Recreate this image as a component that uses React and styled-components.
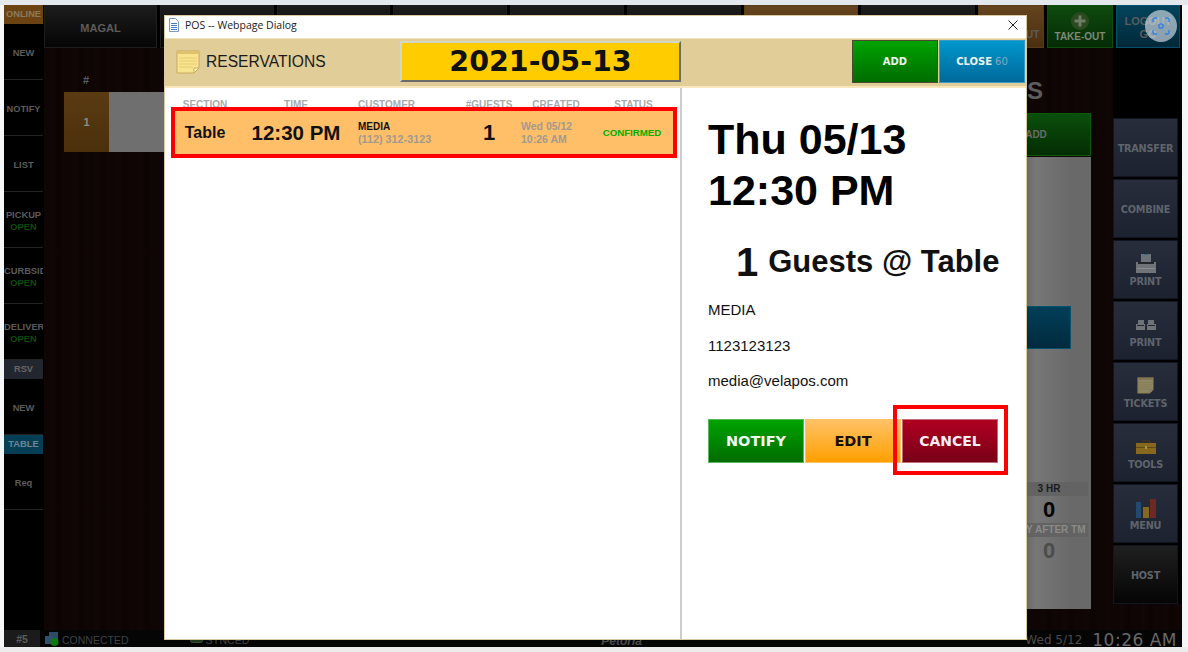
import React from 'react';
import styled, { createGlobalStyle } from 'styled-components';

const GlobalStyle = createGlobalStyle`
    html, body {
        margin: 0;
        padding: 0;
        background: #f2f4f6;
    }
    * {
        box-sizing: border-box;
    }
`;

const SANS = '"Liberation Sans", Arial, sans-serif';
const WIDE = '"DejaVu Sans", Verdana, sans-serif';
const WOOD = 'repeating-linear-gradient(90deg, #0e0504 0, #0e0504 7px, #110706 7px, #0c0403 15px, #0f0605 22px)';

const Frame = styled.div`
    width: 1188px;
    height: 652px;
    overflow: hidden;
    position: relative;
    padding: 5px 6px 5px 4px;
    background: linear-gradient(#e3e8ed 0, #e3e8ed 5px, #f4f6f8 5px, #f4f6f8 647px, #ececec 647px);
    font-family: ${SANS};
`;

const Screen = styled.div`
    width: 1178px;
    height: 642px;
    display: flex;
    flex-direction: column;
    background: #000;
`;

const Main = styled.div`
    height: 625px;
    display: flex;
`;

const Sidebar = styled.div`
    width: 40px;
    flex: none;
    background: #000;
    display: flex;
    flex-direction: column;
`;

const SideItem = styled.div`
    height: 56px;
    width: 39px;
    flex: none;
    border-bottom: 1px solid #242424;
    display: flex;
    flex-direction: column;
    justify-content: center;
    overflow: hidden;
    font-size: 9.3px;
    font-weight: bold;
    line-height: 12px;
    color: #5b5b5b;
    text-align: center;
    white-space: nowrap;
    padding-top: 2px;
`;

const SideLine = styled.div`
    overflow: hidden;
`;

const OpenLabel = styled.div`
    color: #0c4a0c;
`;

const SideTag = styled.div`
    height: 19px;
    width: 39px;
    flex: none;
    font-size: 9.3px;
    font-weight: bold;
    line-height: 19px;
    text-align: center;
    color: ${p => p.$color || '#666'};
    background: ${p => p.$bg};
`;

const Center = styled.div`
    flex: 1;
    display: flex;
    flex-direction: column;
    min-width: 0;
`;

const TopBar = styled.div`
    height: 43px;
    flex: none;
    display: flex;
    gap: 3px;
    padding-right: 5px;
    background: #000;
`;

const TopButton = styled.div`
    width: ${p => p.$w}px;
    flex: none;
    border: 1px solid ${p => p.$line || '#1d1d1d'};
    background: ${p => p.$bg || 'linear-gradient(#1c1c1c, #050505)'};
    color: #5c5c5c;
    font-size: 11px;
    font-weight: bold;
    display: flex;
    flex-direction: column;
    align-items: center;
    justify-content: center;
    overflow: hidden;
    white-space: nowrap;
    line-height: 13px;
    padding-top: ${p => p.$drop || 3}px;
`;

const SmallLabel = styled.span`
    font-size: 10px;
    color: ${p => p.$color || '#5c5c5c'};
`;

const Body = styled.div`
    flex: 1;
    display: flex;
    min-height: 0;
`;

const Floor = styled.div`
    flex: 1;
    display: flex;
    justify-content: space-between;
    background: ${WOOD};
    padding-right: 22px;
`;

const TicketList = styled.div`
    padding: 26px 0 0 20px;
`;

const ListHead = styled.div`
    height: 18px;
    display: flex;
    gap: 74px;
    padding-left: 19px;
    font-size: 11px;
    font-weight: bold;
    color: #5c5c5c;
`;

const TicketRow = styled.div`
    display: flex;
    height: 60px;
    color: #8b8b8b;
    font-size: 11px;
    font-weight: bold;
`;

const TicketNum = styled.div`
    width: 45px;
    background: linear-gradient(#5a3b12, #4b300c);
    display: flex;
    align-items: center;
    justify-content: center;
`;

const TicketBody = styled.div`
    width: 120px;
    background: #6f6f6f;
`;

const TablePanel = styled.div`
    width: 180px;
    display: flex;
    flex-direction: column;
    align-items: flex-end;
`;

const PanelTitle = styled.div`
    height: 65px;
    padding: 29px 48px 0 0;
    font-size: 24px;
    line-height: 28px;
    font-weight: bold;
    color: #5c5c5c;
`;

const PanelAdd = styled.div`
    width: 110px;
    height: 43px;
    background: linear-gradient(#0b4f0b, #042c04);
    border: 1px solid #0a5a0a;
    color: #6a6a6a;
    font-size: 10px;
    font-weight: bold;
    display: flex;
    align-items: center;
    justify-content: center;
`;

const GreyBoard = styled.div`
    margin-top: 1px;
    width: 180px;
    height: 452px;
    padding-top: 149px;
    background: linear-gradient(90deg, #6a6a6a 0, #6a6a6a 115px, #777 125px, #696969 160px);
    display: flex;
    flex-direction: column;
    align-items: flex-end;
`;

const BlueBlock = styled.div`
    width: 130px;
    height: 43px;
    margin-right: 20px;
    background: linear-gradient(#023f58, #012a3e);
    border: 1px solid #03536f;
`;

const Stats = styled.div`
    margin-top: 133px;
    margin-right: 3px;
    width: 78px;
    text-align: center;
    font-weight: bold;
`;

const StatLabel = styled.div`
    height: 14px;
    font-size: 10px;
    line-height: 14px;
    white-space: nowrap;
    color: ${p => p.$color};
    background: #636363;
    display: flex;
    justify-content: center;
`;

const StatValue = styled.div`
    height: 27px;
    font-size: 22px;
    line-height: 27px;
    color: ${p => p.$color};
`;

const ActionColumn = styled.div`
    width: 69px;
    flex: none;
    background: #000;
    padding-top: 70px;
    display: flex;
    flex-direction: column;
    gap: 2px;
`;

const ActionButton = styled.div`
    width: 65px;
    height: 59px;
    flex: none;
    border: 1px solid #101620;
    background: ${p => p.$dark ? 'linear-gradient(#1f1f1f, #050505)' : 'linear-gradient(#272d3a, #1c2230)'};
    color: #5f646c;
    font-size: 9.7px;
    line-height: 12px;
    font-weight: bold;
    display: flex;
    flex-direction: column;
    align-items: center;
    justify-content: center;
    font-family: ${WIDE};
    letter-spacing: -0.2px;
    padding-top: 2px;
`;

const IconSlot = styled.div`
    height: 24px;
    display: flex;
    align-items: center;
    justify-content: center;
    margin-top: -2px;
`;

const ActionFoot = styled.div`
    flex: 1;
    margin-top: -2px;
    background: ${WOOD};
`;

const StatusBar = styled.div`
    height: 17px;
    flex: none;
    display: flex;
    align-items: center;
    background: #050505;
    font-size: 10.5px;
    color: #3e4143;
`;

const StationTag = styled.div`
    width: 36px;
    height: 17px;
    background: #1b1b1b;
    color: #5c5c5c;
    font-weight: bold;
    text-align: center;
    line-height: 19px;
    margin-right: 5px;
`;

const StatusText = styled.span`
    margin: 2px ${p => p.$after || 0}px 0 3px;
`;

const VenueName = styled.span`
    margin: 5px 0 0 352px;
    font-size: 12px;
    font-weight: bold;
    font-style: italic;
    color: #4a4a4a;
`;

const StatusClock = styled.div`
    margin-left: auto;
    display: flex;
    align-items: center;
    gap: 10px;
    padding: 3px 5px 0 0;
    font-family: ${WIDE};
    color: #686868;
`;

const ClockTime = styled.span`
    font-size: 17px;
    letter-spacing: 0.5px;
`;

const ClockDate = styled.span`
    font-size: 12px;
    color: #4a4a4a;
`;

const Dialog = styled.div`
    position: absolute;
    left: 164px;
    top: 15px;
    width: 863px;
    height: 625px;
    border: 1px solid #d8c9a0;
    background: #fff;
    display: flex;
    flex-direction: column;
`;

const TitleBar = styled.div`
    height: 22px;
    flex: none;
    display: flex;
    align-items: center;
    padding: 0 8px 4px 3px;
    background: #fff;
    font-family: "Open Sans", "Noto Sans", sans-serif;
    font-size: 10.5px;
    color: #1a1a1a;
    gap: 5px;
`;

const CloseX = styled.svg`
    margin-left: auto;
`;

const Header = styled.div`
    height: 50px;
    flex: none;
    display: flex;
    align-items: center;
    padding: 0 1px 2px 11px;
    background: #e0cd98;
    border-top: 1px solid #efe2bd;
    border-bottom: 2px solid #f8e7bd;
`;

const HeaderTitle = styled.div`
    width: 194px;
    margin-left: 6px;
    font-size: 15.6px;
    color: #1a1a1a;
`;

const DateButton = styled.div`
    width: 281px;
    height: 41px;
    background: #ffcc00;
    border: 2px solid;
    border-color: #d6d6c8 #6b6b6b #6b6b6b #d6d6c8;
    font-family: ${WIDE};
    font-size: 28.5px;
    font-weight: bold;
    color: #111;
    display: flex;
    align-items: center;
    justify-content: center;
`;

const HeaderButtons = styled.div`
    margin-left: auto;
    display: flex;
    gap: 1px;
`;

const HeaderButton = styled.div`
    width: 86px;
    height: 43px;
    background: ${p => p.$bg};
    border: 1px solid ${p => p.$line};
    color: #eef4ee;
    font-family: ${WIDE};
    font-size: 10px;
    font-weight: bold;
    display: flex;
    align-items: center;
    justify-content: center;
    gap: 3px;
`;

const Countdown = styled.span`
    color: #83a9bd;
    font-weight: normal;
`;

const DialogBody = styled.div`
    flex: 1;
    display: flex;
    min-height: 0;
`;

const ListPane = styled.div`
    width: 517px;
    flex: none;
    border-right: 2px solid #cccccc;
    padding: 9px 0 0 6px;
`;

const COLUMNS = '60px 122px 103px 58px 76px 79px';

const ListHeader = styled.div`
    display: grid;
    grid-template-columns: ${COLUMNS};
    height: 10px;
    padding: 0 4px;
    overflow: hidden;
    font-size: 10px;
    line-height: 16px;
    font-weight: bold;
    color: #a9abad;
    text-align: center;
    white-space: nowrap;
`;

const CustomerHead = styled.div`
    text-align: left;
    padding-left: 1px;
`;

const ReservationRow = styled.div`
    display: grid;
    grid-template-columns: ${COLUMNS};
    align-items: center;
    width: 506px;
    height: 51px;
    border: 4px solid #ff0000;
    background: #ffbf69;
    color: #111;
`;

const CellSection = styled.div`
    font-size: 16px;
    font-weight: bold;
    text-align: center;
    padding-top: 1px;
`;

const CellTime = styled.div`
    font-size: 20.5px;
    font-weight: bold;
    text-align: center;
    white-space: nowrap;
    padding-top: 1px;
`;

const CellStack = styled.div`
    font-size: 10px;
    line-height: 13px;
    font-weight: bold;
    white-space: nowrap;
    padding-left: 1px;
`;

const Faded = styled.div`
    font-size: 10.8px;
    color: #a39a8c;
`;

const CellGuests = styled.div`
    font-size: 22px;
    font-weight: bold;
    text-align: center;
    padding-top: 1px;
`;

const CellCreated = styled(CellStack)`
    font-size: 10.5px;
    color: #a39a8c;
    padding-left: 3px;
`;

const CellStatus = styled.div`
    font-size: 9.7px;
    font-weight: bold;
    color: #00b000;
    text-align: center;
    white-space: nowrap;
    padding-right: 3px;
`;

const DetailPane = styled.div`
    flex: 1;
    padding: 26px 0 0 26px;
`;

const BigDate = styled.div`
    font-size: 43px;
    line-height: 51px;
    font-weight: bold;
    color: #000;
    white-space: nowrap;
`;

const GuestLine = styled.div`
    margin: 20px 0 0 28px;
    height: 52px;
    display: flex;
    align-items: center;
    gap: 10px;
    font-size: 31px;
    font-weight: bold;
    color: #111;
    white-space: nowrap;
`;

const GuestCount = styled.span`
    font-size: 40px;
`;

const Contact = styled.div`
    margin-top: 4px;
    font-size: 15px;
    line-height: 35.5px;
    color: #111;
`;

const DetailButtons = styled.div`
    margin-top: 20px;
    display: flex;
    gap: 1px;
`;

const DetailButton = styled.div`
    width: 96px;
    height: 44px;
    border: 1px solid ${p => p.$line};
    background: ${p => p.$bg};
    color: ${p => p.$color};
    font-family: ${WIDE};
    font-size: 14.5px;
    font-weight: bold;
    display: flex;
    align-items: center;
    justify-content: center;
    position: relative;
`;

const CancelButton = styled(DetailButton)`
    font-size: 14px;

    &::after {
        content: '';
        position: absolute;
        left: -10px;
        right: -11px;
        top: -15px;
        bottom: -13px;
        border: 4px solid #ff0000;
    }
`;

const CaptureBadge = styled.div`
    position: absolute;
    left: 1145px;
    top: 10px;
    width: 32px;
    height: 32px;
    border-radius: 50%;
    background: rgba(226, 232, 240, 0.62);
    display: flex;
    align-items: center;
    justify-content: center;
`;

const DocIcon = () => (
    <svg width="12" height="14" viewBox="0 0 12 14">
        <path d="M1.5.5h6l3 3v10h-9z" fill="#fdfeff" stroke="#7d98b5" />
        <path d="M3 5.500h6M3 7.500h6M3 9.500h6M3 11.500h6" stroke="#3f7fc2" strokeWidth="1" />
    </svg>
);

const NoteIcon = ({ size = 24, dim }) => (
    <svg width={size} height={size} viewBox="0 0 24 24" style={{ opacity: dim ? 0.5 : 1, flex: 'none' }}>
        <path d="M1 1h22v17l-5 5H1z" fill="#f8e48f" stroke="#c9a95c" />
        <path d="M1 1h22v3H1z" fill="#e0c26c" />
        <path d="M3 8h18M3 11h18M3 14h18M3 17h14" stroke="#e8cc72" strokeWidth="1" />
        <path d="M18 23v-5h5z" fill="#fff4c8" stroke="#c9a95c" />
    </svg>
);

const PrinterIcon = () => (
    <svg width="20" height="19" viewBox="0 0 20 19">
        <path d="M5 0h10v8H5z" fill="#6d7379" />
        <path d="M8 0h4v1H8z" fill="#2f6d8f" />
        <path d="M0 8h20v11H0z" fill="#707478" />
        <path d="M2 8h16v2H2z" fill="#23262a" />
        <path d="M1 14h18v1H1z" fill="#8a8d90" />
    </svg>
);

const DoublePrinter = () => (
    <svg width="20" height="10" viewBox="0 0 20 10">
        <path d="M2 0h6v4H2zM12 0h6v4h-6z" fill="#6d7379" />
        <path d="M0 4h9v6H0zM11 4h9v6h-9z" fill="#707478" />
        <path d="M1 5h7v1H1zM12 5h7v1h-7z" fill="#23262a" />
    </svg>
);

const ToolboxIcon = () => (
    <svg width="20" height="14" viewBox="0 0 20 14">
        <path d="M6 3V1h8v2" fill="none" stroke="#4b3a12" />
        <path d="M0 3h20v11H0z" fill="#87681c" />
        <path d="M0 7h20v1H0z" fill="#5f4a14" />
        <path d="M9 6h2v3H9z" fill="#a99656" />
    </svg>
);

const ChartIcon = () => (
    <svg width="20" height="20" viewBox="0 0 20 20">
        <path d="M0 4h5v16H0z" fill="#25486e" />
        <path d="M7 9h6v11H7z" fill="#85681f" />
        <path d="M14 1h6v19h-6z" fill="#6e2a22" />
    </svg>
);

const PlusBadge = () => (
    <svg width="18" height="18" viewBox="0 0 18 18">
        <circle cx="9" cy="9" r="9" fill="#2b4a20" />
        <path d="M7.500 3.500h3v4h4v3h-4v4h-3v-4h-4v-3h4z" fill="#6d7d66" />
    </svg>
);

const ConnectedIcon = () => (
    <svg width="14" height="14" viewBox="0 0 14 14">
        <path d="M4 0h9v8H4z" fill="#2e4a66" />
        <path d="M0 4h8v8H0z" fill="#30516f" />
        <circle cx="9.500" cy="10" r="4" fill="#0d7a0d" />
    </svg>
);

const SyncedIcon = () => (
    <svg width="13" height="14" viewBox="0 0 13 14">
        <rect x="0.5" y="0.5" width="12" height="10" rx="2" fill="#1e3a1e" stroke="#3d4a3d" />
    </svg>
);

const ScanIcon = () => (
    <svg width="18" height="18" viewBox="0 0 18 18" fill="none" stroke="#2f7fe0" strokeWidth="1.3">
        <path d="M1 5V2.500A1.500 1.500 0 0 1 2.500 1H5M13 1h2.500A1.500 1.500 0 0 1 17 2.500V5M17 13v2.500a1.500 1.500 0 0 1-1.500 1.500H13M5 17H2.500A1.500 1.500 0 0 1 1 15.500V13" />
        <circle cx="9" cy="9" r="2.200" />
    </svg>
);

const sideItems = [
    ['NEW'], ['NOTIFY'], ['LIST'], ['PICKUP', true], ['CURBSIDE', true], ['DELIVERY', true],
];

const topButtons = [
    ['MAGAL', 113], ['', 114], ['', 113], ['', 114], ['', 114], ['', 114],
];

export default function App() {
    return (
        <Frame>
            <GlobalStyle />
            <Screen>
                <Main>
                    <Sidebar>
                        <SideTag $bg="#6b4312" $color="#8a7a5c">ONLINE</SideTag>
                        {sideItems.map(([label, open]) => (
                            <SideItem key={label}>
                                <SideLine>{label}</SideLine>
                                {open && <OpenLabel>OPEN</OpenLabel>}
                            </SideItem>
                        ))}
                        <SideTag $bg="#22262f">RSV</SideTag>
                        <SideItem>NEW</SideItem>
                        <SideTag $bg="#063e55" $color="#6f8790">TABLE</SideTag>
                        <SideItem>Req</SideItem>
                    </Sidebar>
                    <Center>
                        <TopBar>
                            {topButtons.map(([label, w], i) => (
                                <TopButton key={i} $w={w}>{label}</TopButton>
                            ))}
                            <TopButton $w={114} $bg="linear-gradient(#65441f, #4a2f0f)" $line="#5a3b18" />
                            <TopButton $w={114} />
                            <TopButton $w={66} $drop={16} $bg="linear-gradient(#65441f, #4a2f0f)" $line="#5a3b18">
                                <SmallLabel>CHECKOUT</SmallLabel>
                            </TopButton>
                            <TopButton $w={66} $drop={1} $bg="linear-gradient(#0e4a0e, #052b05)" $line="#0c4f0c">
                                <PlusBadge />
                                <SmallLabel $color="#7c8a78">TAKE-OUT</SmallLabel>
                            </TopButton>
                            <TopButton $w={64} $bg="linear-gradient(#04445c, #012838)" $line="#04506c">
                                LOGOUT
                                <span>GO</span>
                            </TopButton>
                        </TopBar>
                        <Body>
                            <Floor>
                                <TicketList>
                                    <ListHead>
                                        <span>#</span>
                                        <span>SERVER</span>
                                    </ListHead>
                                    <TicketRow>
                                        <TicketNum>1</TicketNum>
                                        <TicketBody />
                                    </TicketRow>
                                </TicketList>
                                <TablePanel>
                                    <PanelTitle>TABLES</PanelTitle>
                                    <PanelAdd>ADD</PanelAdd>
                                    <GreyBoard>
                                        <BlueBlock />
                                        <Stats>
                                            <StatLabel $color="#1c1c1c">3 HR</StatLabel>
                                            <StatValue $color="#050505">0</StatValue>
                                            <StatLabel $color="#8a8a8a">DAY AFTER TM</StatLabel>
                                            <StatValue $color="#4c4c4c">0</StatValue>
                                        </Stats>
                                    </GreyBoard>
                                </TablePanel>
                            </Floor>
                            <ActionColumn>
                                <ActionButton>TRANSFER</ActionButton>
                                <ActionButton>COMBINE</ActionButton>
                                <ActionButton><IconSlot><PrinterIcon /></IconSlot>PRINT</ActionButton>
                                <ActionButton><IconSlot><DoublePrinter /></IconSlot>PRINT</ActionButton>
                                <ActionButton><IconSlot><NoteIcon size={17} dim /></IconSlot>TICKETS</ActionButton>
                                <ActionButton><IconSlot><ToolboxIcon /></IconSlot>TOOLS</ActionButton>
                                <ActionButton><IconSlot><ChartIcon /></IconSlot>MENU</ActionButton>
                                <ActionButton $dark>HOST</ActionButton>
                                <ActionFoot />
                            </ActionColumn>
                        </Body>
                    </Center>
                </Main>
                <StatusBar>
                    <StationTag>#5</StationTag>
                    <ConnectedIcon />
                    <StatusText $after={61}>CONNECTED</StatusText>
                    <SyncedIcon />
                    <StatusText>SYNCED</StatusText>
                    <VenueName>Petoria</VenueName>
                    <StatusClock>
                        <ClockDate>Wed 5/12</ClockDate>
                        <ClockTime>10:26 AM</ClockTime>
                    </StatusClock>
                </StatusBar>
            </Screen>

            <Dialog>
                <TitleBar>
                    <DocIcon />
                    POS -- Webpage Dialog
                    <CloseX width="10" height="10" viewBox="0 0 10 10">
                        <path d="M.5.5l9 9M9.500.5l-9 9" stroke="#222" strokeWidth="1" />
                    </CloseX>
                </TitleBar>
                <Header>
                    <NoteIcon />
                    <HeaderTitle>RESERVATIONS</HeaderTitle>
                    <DateButton>2021-05-13</DateButton>
                    <HeaderButtons>
                        <HeaderButton $bg="linear-gradient(#00a300, #006c00)" $line="#4a4a32">ADD</HeaderButton>
                        <HeaderButton $bg="linear-gradient(#0097cd, #00699a)" $line="#3a9ac4">
                            CLOSE <Countdown>60</Countdown>
                        </HeaderButton>
                    </HeaderButtons>
                </Header>
                <DialogBody>
                    <ListPane>
                        <ListHeader>
                            <div>SECTION</div>
                            <div>TIME</div>
                            <CustomerHead>CUSTOMER</CustomerHead>
                            <div>#GUESTS</div>
                            <div>CREATED</div>
                            <div>STATUS</div>
                        </ListHeader>
                        <ReservationRow>
                            <CellSection>Table</CellSection>
                            <CellTime>12:30 PM</CellTime>
                            <CellStack>
                                MEDIA
                                <Faded>(112) 312-3123</Faded>
                            </CellStack>
                            <CellGuests>1</CellGuests>
                            <CellCreated>
                                Wed 05/12
                                <div>10:26 AM</div>
                            </CellCreated>
                            <CellStatus>CONFIRMED</CellStatus>
                        </ReservationRow>
                    </ListPane>
                    <DetailPane>
                        <BigDate>Thu 05/13</BigDate>
                        <BigDate>12:30 PM</BigDate>
                        <GuestLine>
                            <GuestCount>1</GuestCount>
                            Guests @ Table
                        </GuestLine>
                        <Contact>
                            <div>MEDIA</div>
                            <div>1123123123</div>
                            <div>media@velapos.com</div>
                        </Contact>
                        <DetailButtons>
                            <DetailButton $bg="linear-gradient(#00a300, #006c00)" $line="#5cb85c" $color="#f2f8f2">NOTIFY</DetailButton>
                            <DetailButton $bg="linear-gradient(#ffc266, #ff9f00)" $line="#ffc266" $color="#1a1005">EDIT</DetailButton>
                            <CancelButton $bg="linear-gradient(#b00020, #780018)" $line="#c06a7a" $color="#f6eef0">CANCEL</CancelButton>
                        </DetailButtons>
                    </DetailPane>
                </DialogBody>
            </Dialog>

            <CaptureBadge>
                <ScanIcon />
            </CaptureBadge>
        </Frame>
    );
}
